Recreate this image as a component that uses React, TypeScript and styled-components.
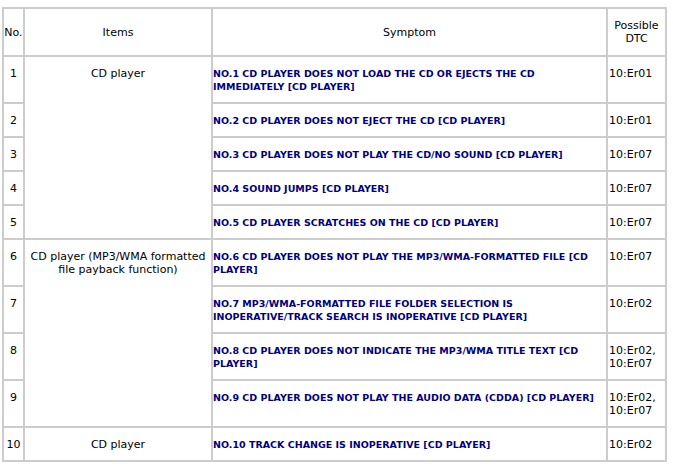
import React from "react";
import styled, { createGlobalStyle } from "styled-components";

const Global = createGlobalStyle`
  html, body { margin: 0; padding: 0; background: #ffffff; }
  body { padding: 7px 0 0 2px; font-family: "DejaVu Sans", Verdana, sans-serif; }
`;

const Table = styled.div`
  display: grid;
  grid-template-columns: 19px 186px 393px 57px;
  gap: 2px;
  padding: 2px;
  width: 665px;
  box-sizing: border-box;
  background: #cccccc;
`;

const HeadCell = styled.div`
  background: #ffffff;
  display: flex;
  align-items: center;
  justify-content: center;
  text-align: center;
  padding: 10px 0;
  min-height: 26px;
  font-size: 11px;
  line-height: 13px;
  color: #000000;
`;

const Cell = styled.div<{ $col: number; $span?: number; $align?: string }>`
  grid-column: ${(p) => p.$col};
  ${(p) => (p.$span ? `grid-row: span ${p.$span};` : "")}
  background: #ffffff;
  padding: 10px 1px 9px 1px;
  font-size: 11px;
  line-height: 13px;
  color: #000000;
  text-align: ${(p) => p.$align || "left"};
`;

const NoCell = styled(Cell)`
  padding-left: 0;
  padding-right: 0;
`;

const SymptomCell = styled(Cell)`
  font-size: 9.5px;
  font-weight: bold;
  color: #000080;
  padding-left: 0;
`;

type Row = { no: string; symptom: string; dtc: string };

const rows: Row[] = [
  { no: "1", symptom: "NO.1 CD PLAYER DOES NOT LOAD THE CD OR EJECTS THE CD IMMEDIATELY [CD PLAYER]", dtc: "10:Er01" },
  { no: "2", symptom: "NO.2 CD PLAYER DOES NOT EJECT THE CD [CD PLAYER]", dtc: "10:Er01" },
  { no: "3", symptom: "NO.3 CD PLAYER DOES NOT PLAY THE CD/NO SOUND [CD PLAYER]", dtc: "10:Er07" },
  { no: "4", symptom: "NO.4 SOUND JUMPS [CD PLAYER]", dtc: "10:Er07" },
  { no: "5", symptom: "NO.5 CD PLAYER SCRATCHES ON THE CD [CD PLAYER]", dtc: "10:Er07" },
  { no: "6", symptom: "NO.6 CD PLAYER DOES NOT PLAY THE MP3/WMA-FORMATTED FILE [CD PLAYER]", dtc: "10:Er07" },
  { no: "7", symptom: "NO.7 MP3/WMA-FORMATTED FILE FOLDER SELECTION IS INOPERATIVE/TRACK SEARCH IS INOPERATIVE [CD PLAYER]", dtc: "10:Er02" },
  { no: "8", symptom: "NO.8 CD PLAYER DOES NOT INDICATE THE MP3/WMA TITLE TEXT [CD PLAYER]", dtc: "10:Er02, 10:Er07" },
  { no: "9", symptom: "NO.9 CD PLAYER DOES NOT PLAY THE AUDIO DATA (CDDA) [CD PLAYER]", dtc: "10:Er02, 10:Er07" },
  { no: "10", symptom: "NO.10 TRACK CHANGE IS INOPERATIVE [CD PLAYER]", dtc: "10:Er02" },
];

const groups: Record<number, { label: string; span: number }> = {
  0: { label: "CD player", span: 5 },
  5: { label: "CD player (MP3/WMA formatted file payback function)", span: 4 },
  9: { label: "CD player", span: 1 },
};

export default function App() {
  return (
    <>
      <Global />
      <Table>
        <HeadCell>No.</HeadCell>
        <HeadCell>Items</HeadCell>
        <HeadCell>Symptom</HeadCell>
        <HeadCell>Possible DTC</HeadCell>
        {rows.map((r, i) => (
          <React.Fragment key={r.no}>
            <NoCell $col={1} $align="center">{r.no}</NoCell>
            {groups[i] && (
              <Cell $col={2} $span={groups[i].span} $align="center">
                {groups[i].label}
              </Cell>
            )}
            <SymptomCell $col={3}>{r.symptom}</SymptomCell>
            <Cell $col={4}>{r.dtc}</Cell>
          </React.Fragment>
        ))}
      </Table>
    </>
  );
}
